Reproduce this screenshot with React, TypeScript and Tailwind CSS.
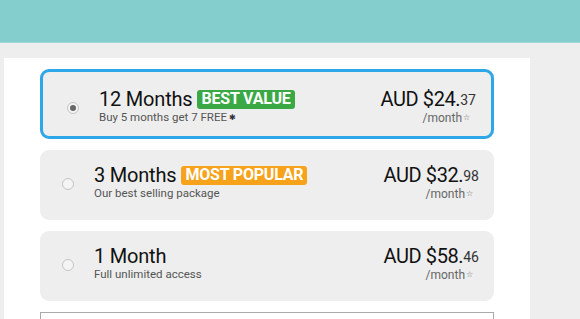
import React from "react";

type Plan = {
  title: string;
  badge?: { text: string; color: string };
  sub: string;
  subStar?: boolean;
  whole: string;
  cents: string;
  selected?: boolean;
};

const plans: Plan[] = [
  {
    title: "12 Months",
    badge: { text: "BEST VALUE", color: "bg-[#3aa845]" },
    sub: "Buy 5 months get 7 FREE",
    subStar: true,
    whole: "AUD $24.",
    cents: "37",
    selected: true,
  },
  {
    title: "3 Months",
    badge: { text: "MOST POPULAR", color: "bg-[#f7a21b]" },
    sub: "Our best selling package",
    whole: "AUD $32.",
    cents: "98",
  },
  {
    title: "1 Month",
    sub: "Full unlimited access",
    whole: "AUD $58.",
    cents: "46",
  },
];

function Radio({ checked }: { checked?: boolean }) {
  return (
    <div className="w-[12px] h-[12px] rounded-full border border-[#c4c4c4] bg-[#f4f4f4] flex items-center justify-center shrink-0">
      {checked && <div className="w-[6px] h-[6px] rounded-full bg-[#666]" />}
    </div>
  );
}

function PlanCard({ plan }: { plan: Plan }) {
  return (
    <div
      className={
        plan.selected
          ? "h-[70px] rounded-[9px] border-[3px] border-[#2ea6ea] bg-[#eeeeee] flex items-start pl-[24px] pr-[15px] pt-[16px]"
          : "h-[70px] rounded-[9px] bg-[#eeeeee] flex items-start pl-[22px] pr-[15px] pt-[14px]"
      }
    >
      <div className="mt-[14px]">
        <Radio checked={plan.selected} />
      </div>
      <div className="ml-[20px] flex-1">
        <div className="flex items-center h-[22px]">
          <span className="text-[20px] leading-[22px] text-[#111] tracking-[-0.2px]">{plan.title}</span>
          {plan.badge && (
            <span
              className={`${plan.badge.color} ml-[5px] rounded-[3px] px-[4px] h-[19px] flex items-center text-white font-bold text-[16px] tracking-[-0.2px] leading-none`}
            >
              {plan.badge.text}
            </span>
          )}
        </div>
        <div className="text-[11.5px] leading-[13px] text-[#555] mt-[1px]">
          {plan.sub}
          {plan.subStar && <span className="text-[8px] align-top ml-[2px] text-[#333]">✱</span>}
        </div>
      </div>
      <div className="flex flex-col items-end">
        <div className="h-[22px] flex items-end text-[#111]">
          <span className="text-[20px] leading-[22px] tracking-[-0.4px]">{plan.whole}</span>
          <span className="text-[14px] leading-[19px] text-[#333]">{plan.cents}</span>
        </div>
        <div className="text-[12px] leading-[14px] text-[#666] mt-[1px] mr-[6px]">
          /month<span className="text-[8px] align-top ml-[1px]">☆</span>
        </div>
      </div>
    </div>
  );
}

export default function App() {
  return (
    <div
      className="w-[580px] h-[319px] overflow-hidden bg-[#eeeeee]"
      style={{ fontFamily: "Roboto, 'Noto Sans', Arial, sans-serif" }}
    >
      <div className="h-[43px] bg-[#84cece] border-b border-[#9fd8d8]" />
      <div className="pl-[4px] pt-[15px]">
        <div className="w-[526px] h-[300px] bg-white pt-[11px] pl-[36px] pr-[36px] flex flex-col gap-[11px]">
          {plans.map((p) => (
            <PlanCard key={p.title} plan={p} />
          ))}
          <div className="h-[40px] border border-[#aaa] bg-white" />
        </div>
      </div>
    </div>
  );
}
